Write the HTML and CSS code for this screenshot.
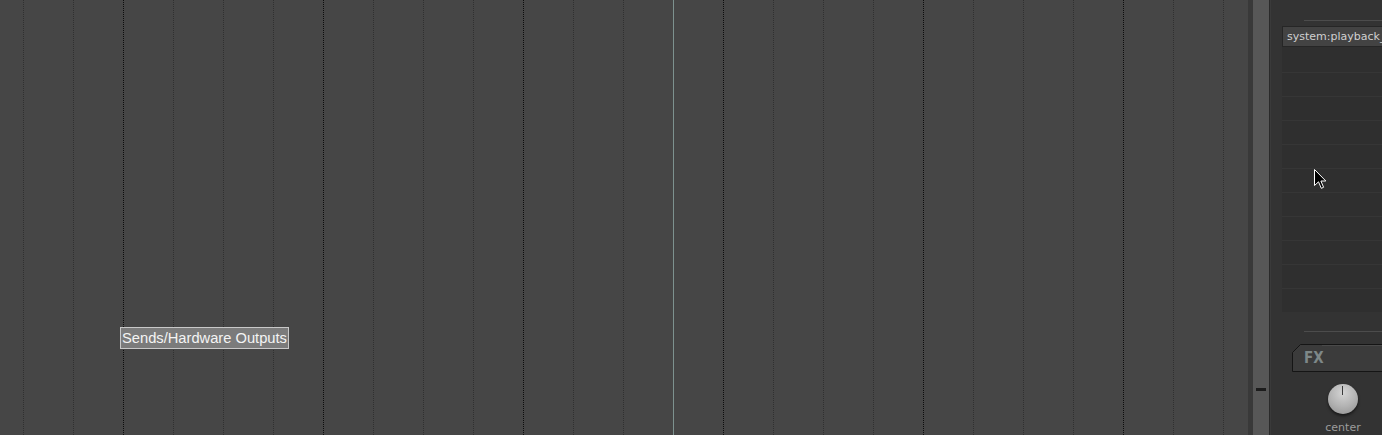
FILE: index.html
```html
<!DOCTYPE html>
<html>
<head>
<meta charset="utf-8">
<link rel="stylesheet" href="styles.css">
</head>
<body>
<div class="app">
  <div class="canvas">
    <div class="grid">
      <div class="col"></div><div class="col"></div><div class="col dark"></div><div class="col"></div>
      <div class="col"></div><div class="col"></div><div class="col dark"></div><div class="col"></div>
      <div class="col"></div><div class="col"></div><div class="col dark"></div><div class="col"></div>
      <div class="col"></div><div class="col"></div><div class="col dark"></div><div class="col"></div>
      <div class="col"></div><div class="col"></div><div class="col dark"></div><div class="col"></div>
      <div class="col"></div><div class="col"></div><div class="col dark"></div><div class="col"></div>
      <div class="col"></div>
    </div>
    <div class="playhead"></div>
    <div class="tooltip">Sends/Hardware Outputs</div>
  </div>
  <div class="gap"></div>
  <div class="strip"><div class="dash"></div></div>
  <div class="edge"></div>
  <div class="panel">
    <div class="rule top"></div>
    <div class="port">system:playback_</div>
    <div class="list">
      <div class="row"></div><div class="row"></div><div class="row"></div><div class="row"></div>
      <div class="row"></div><div class="row"></div><div class="row"></div><div class="row"></div>
      <div class="row"></div><div class="row"></div><div class="row"></div>
    </div>
    <div class="rule mid"></div>
    <div class="fx">
      <svg class="fx-shape" width="100" height="28" viewBox="0 0 100 28">
        <path d="M0.5 8.5 L8.5 0.5 L100 0.5 L100 27.5 L0.5 27.5 Z" fill="#3b3b3b" stroke="#151515"/>
        <path d="M30 1.5 L100 1.5" stroke="#4a4a4a" stroke-width="1"/>
      </svg>
      <span class="fx-label">FX</span>
    </div>
    <div class="knob-wrap">
      <div class="knob"><div class="tick"></div></div>
      <div class="knob-label">center</div>
    </div>
  </div>
  <svg class="cursor" width="13" height="21" viewBox="0 0 13 21">
    <path d="M0.5 0.5 L0.5 16.5 L4.5 12.8 L7.3 19.3 L9.6 18.3 L6.9 12 L11.8 12 Z" fill="#000" stroke="#fff" stroke-width="1"/>
  </svg>
</div>
</body>
</html>
```
FILE: styles.css
```css
html, body {
  margin: 0;
  padding: 0;
  background: #454545;
  overflow: hidden;
}
.app {
  position: relative;
  display: flex;
  width: 1382px;
  height: 435px;
  font-family: "DejaVu Sans", sans-serif;
}
.canvas {
  position: relative;
  width: 1248px;
  height: 435px;
  background: #464646;
  overflow: hidden;
}
.grid {
  display: flex;
  height: 100%;
  padding-left: 23px;
}
.col {
  flex: 0 0 50px;
  box-sizing: border-box;
  border-left: 1px dotted #303030;
}
.col.dark {
  border-left-color: #0c0c0c;
}
.playhead {
  position: absolute;
  left: 673px;
  top: 0;
  width: 1px;
  height: 100%;
  background: #7d928f;
}
.tooltip {
  position: absolute;
  left: 120px;
  top: 327px;
  height: 20px;
  padding: 0 1px;
  background: #7b7b7b;
  border: 1px solid #c8c8c8;
  color: #f4f4f4;
  font-family: "Liberation Sans", Arial, sans-serif;
  font-size: 14.7px;
  line-height: 20px;
  white-space: nowrap;
}
.gap {
  width: 5px;
  background: #393939;
}
.strip {
  position: relative;
  width: 16px;
  background: #575757;
}
.dash {
  position: absolute;
  left: 3px;
  top: 388px;
  width: 10px;
  height: 3px;
  background: #1c1c1c;
}
.edge {
  width: 2px;
  background: #2a2a2a;
  box-shadow: inset -1px 0 0 #3a3a3a;
}
.panel {
  flex: 1;
  display: flex;
  flex-direction: column;
  background: #333333;
  padding-left: 11px;
  overflow: hidden;
}
.rule {
  height: 1px;
  background: #4c4c4c;
  margin-left: 22px;
}
.rule.top {
  margin-top: 20px;
}
.port {
  margin-top: 5px;
  height: 19px;
  width: 120px;
  box-sizing: content-box;
  background: #434343;
  border: 1px solid #262626;
  color: #d0d0d0;
  font-size: 11px;
  line-height: 19px;
  padding-left: 4px;
  white-space: nowrap;
}
.list {
  height: 265px;
  box-sizing: border-box;
  padding-top: 2px;
  background: #2f2f2f;
  display: flex;
  flex-direction: column;
  overflow: hidden;
}
.row {
  height: 24px;
  flex: 0 0 24px;
  box-sizing: border-box;
  border-bottom: 1px solid #363636;
}
.rule.mid {
  margin-top: 19px;
}
.fx {
  position: relative;
  margin-top: 12px;
  margin-left: 10px;
  height: 28px;
}
.fx-shape {
  display: block;
}
.fx-label {
  position: absolute;
  left: 12px;
  top: 4px;
  font-family: "DejaVu Sans Condensed", "DejaVu Sans", sans-serif;
  font-weight: bold;
  font-size: 15px;
  line-height: 20px;
  color: #7e8888;
}
.knob-wrap {
  display: flex;
  flex-direction: column;
  align-items: center;
  width: 100px;
  margin-top: 12px;
  margin-left: 11px;
}
.knob {
  position: relative;
  width: 30px;
  height: 30px;
  border-radius: 50%;
  background: radial-gradient(circle at 50% 30%, #d4d4d4 0%, #b4b4b4 50%, #8f8f8f 100%);
  box-shadow: 0 2px 3px rgba(0,0,0,0.55);
}
.tick {
  position: absolute;
  left: 14px;
  top: 2px;
  width: 1px;
  height: 9px;
  background: #3a3a3a;
}
.knob-label {
  margin-top: 7px;
  font-size: 11px;
  color: #9c9c9c;
  line-height: 13px;
}
.cursor {
  position: absolute;
  left: 1314px;
  top: 169px;
}
```
